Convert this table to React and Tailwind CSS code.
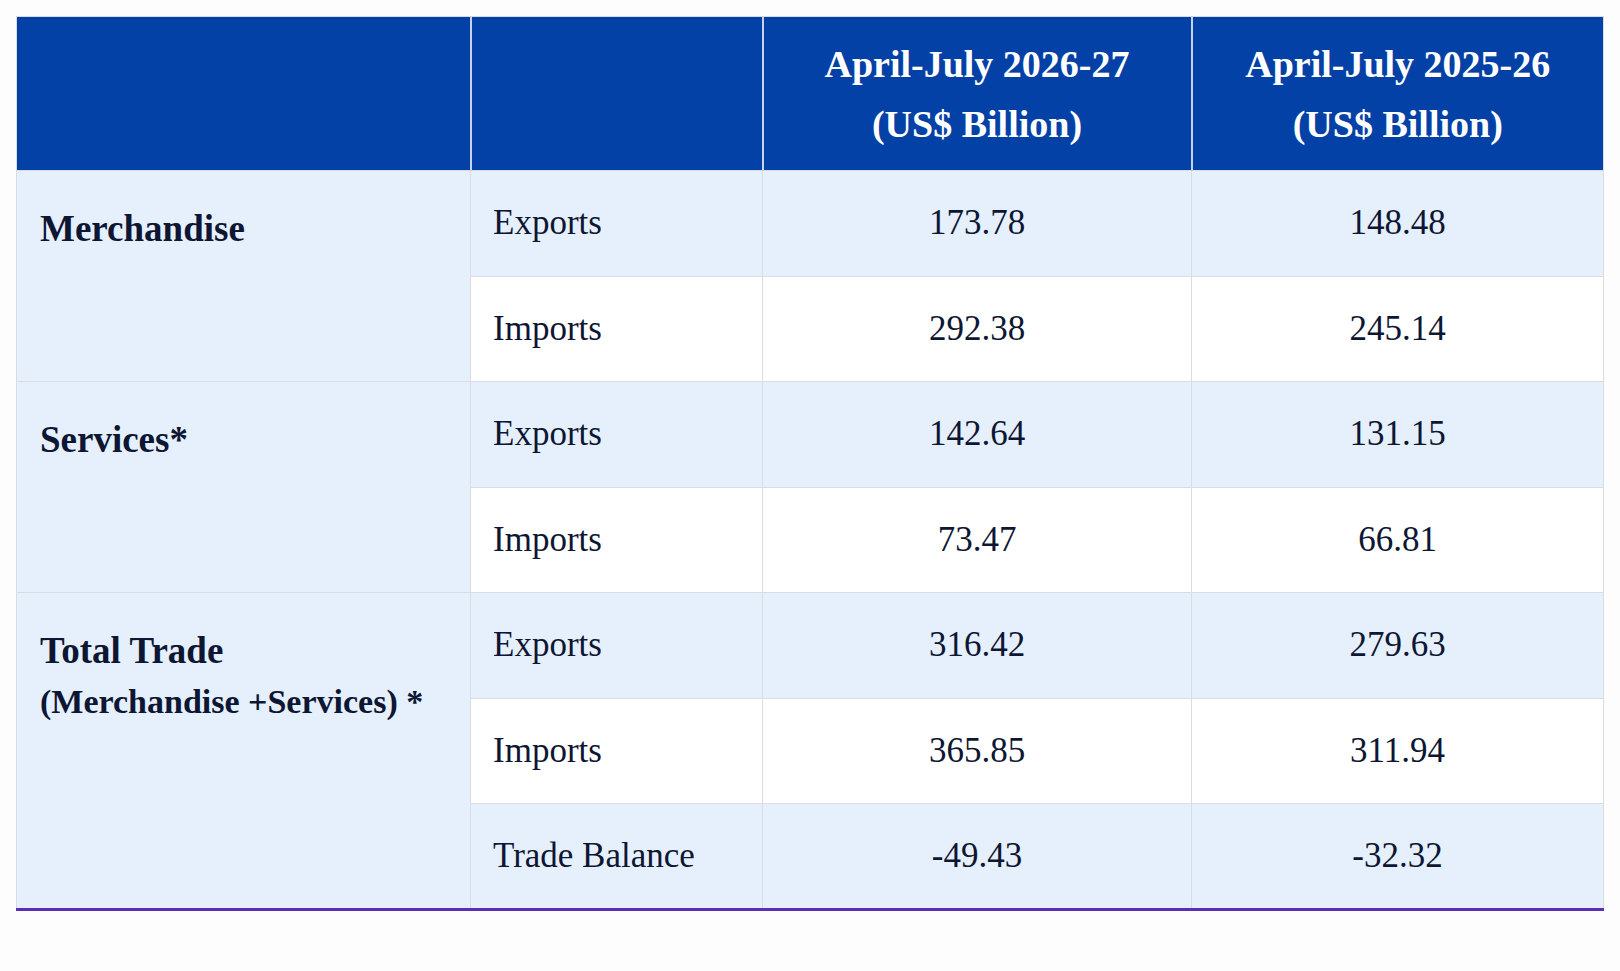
const groups = [
  {
    label: ['Merchandise'],
    rows: [
      ['Exports', '173.78', '148.48'],
      ['Imports', '292.38', '245.14'],
    ],
  },
  {
    label: ['Services*'],
    rows: [
      ['Exports', '142.64', '131.15'],
      ['Imports', '73.47', '66.81'],
    ],
  },
  {
    label: ['Total Trade', '(Merchandise +Services) *'],
    rows: [
      ['Exports', '316.42', '279.63'],
      ['Imports', '365.85', '311.94'],
      ['Trade Balance', '-49.43', '-32.32'],
    ],
  },
]

export default function App() {
  return (
    <div className="min-h-screen bg-[#fdfdfd] p-4 font-['Liberation_Serif','Times_New_Roman',serif] text-[#0d1633]">
      <table className="w-full table-fixed border-collapse border border-b-[3px] border-[#d9dce1] border-b-[#5b2fb3]">
        <colgroup>
          <col className="w-[454px]" />
          <col className="w-[292px]" />
          <col className="w-[429px]" />
          <col />
        </colgroup>
        <thead>
          <tr className="h-[154px] bg-[#0441a6] text-[38px] font-bold leading-[60px] text-white">
            <th className="border-r-2 border-[#c8d3ea]" />
            <th className="border-r-2 border-[#c8d3ea]" />
            <th className="border-r-2 border-[#c8d3ea] text-center font-bold">
              April-July 2026-27
              <br />
              (US$ Billion)
            </th>
            <th className="text-center font-bold">
              April-July 2025-26
              <br />
              (US$ Billion)
            </th>
          </tr>
        </thead>
        <tbody>
          {groups.map((group) =>
            group.rows.map((row, index) => {
              const shaded = index % 2 === 0
              return (
                <tr
                  className={shaded ? 'h-[105.5px] bg-[#e6f0fc]' : 'h-[105.5px] bg-white'}
                  key={group.label[0] + index}
                >
                  {index === 0 && (
                    <td
                      className="border border-[#d9dce1] bg-[#e6f0fc] pl-[23px] pt-[32px] align-top text-[37px] font-bold leading-[51px]"
                      rowSpan={group.rows.length}
                    >
                      {group.label.map((line, i) => (
                        <div className={i > 0 ? 'text-[34px]' : ''} key={line}>
                          {line}
                        </div>
                      ))}
                    </td>
                  )}
                  <td className="border border-[#d9dce1] pl-[22px] text-[35px]">{row[0]}</td>
                  <td className="border border-[#d9dce1] text-center text-[35px]">{row[1]}</td>
                  <td className="border border-[#d9dce1] text-center text-[35px]">{row[2]}</td>
                </tr>
              )
            })
          )}
        </tbody>
      </table>
    </div>
  )
}
